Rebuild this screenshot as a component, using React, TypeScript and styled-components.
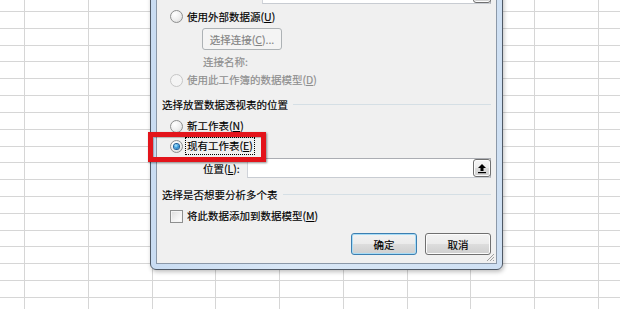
import React from "react";
import styled, { createGlobalStyle } from "styled-components";

const Global = createGlobalStyle`
  html, body { margin: 0; padding: 0; background: #fff; }
  body { width: 620px; height: 309px; overflow: hidden; }
  * { box-sizing: border-box; }
`;

const FONT = `"Noto Sans CJK SC", "Noto Sans", sans-serif`;

const Screen = styled.div`
  position: relative;
  width: 620px;
  height: 309px;
  overflow: hidden;
  background: #fff;
  font-family: ${FONT};
  font-size: 10.5px;
  color: #000;
  -webkit-text-stroke: 0.15px currentColor;
`;

const Sheet = styled.div`
  display: grid;
  grid-template-columns: repeat(11, 63.75px);
  grid-auto-rows: 16.82px;
  margin-left: -38.75px;
  margin-top: -4.82px;
`;

const Cell = styled.div`
  border-right: 1px solid #d6d6d6;
  border-bottom: 1px solid #d6d6d6;
`;

const Window = styled.div`
  position: absolute;
  left: 150px;
  top: -27px;
  width: 353px;
  border: 1px solid #4f5966;
  border-radius: 0 0 6px 6px;
  padding: 5px;
  background: linear-gradient(90deg, #c9dcf2 0%, #d9e7f6 40%, #cfe0f3 100%);
  box-shadow: 1px 2px 4px rgba(0, 0, 0, 0.25);
`;

const Content = styled.div`
  position: relative;
  border: 1px solid #8b98a8;
  background: #f0f0f0;
  display: flex;
  flex-direction: column;
  padding: 0 5px 8px 5px;
`;

const TopRow = styled.div`
  height: 26px;
  display: flex;
  align-items: flex-end;
  padding: 0 0 2px 100px;
`;

const InputBox = styled.div`
  flex: 1;
  height: 20px;
  background: #fff;
  border: 1px solid #abadb3;
  border-left-color: #d0d3d9;
  border-bottom-color: #c8ccd2;
  display: flex;
  align-items: center;
  justify-content: flex-end;
`;

const RangeButton = styled.div`
  width: 18px;
  height: 18px;
  margin-right: -1px;
  border: 1px solid #707070;
  border-radius: 3px;
  background: linear-gradient(#f6f6f6 0%, #ececec 50%, #dcdcdc 50%, #d0d0d0 100%);
  box-shadow: inset 0 0 0 1px #fcfcfc;
  display: flex;
  align-items: center;
  justify-content: center;
`;

const OptionRow = styled.div<{ $h: number; $mt?: number }>`
  height: ${(p) => p.$h}px;
  margin-top: ${(p) => p.$mt ?? 0}px;
  display: flex;
  align-items: center;
  padding-left: 8px;
  gap: 2px;
  white-space: nowrap;
`;

const Radio = styled.span<{ $checked?: boolean; $disabled?: boolean }>`
  flex: none;
  width: 13px;
  height: 13px;
  border-radius: 50%;
  border: 1px solid ${(p) => (p.$disabled ? "#c6c6c6" : "#8e8f8f")};
  background: ${(p) =>
    p.$disabled
      ? "#f4f4f4"
      : "radial-gradient(circle at 35% 30%, #ffffff 0, #eeeeee 55%, #d4d4d4 100%)"};
  display: flex;
  align-items: center;
  justify-content: center;
  &::after {
    content: "";
    display: ${(p) => (p.$checked ? "block" : "none")};
    width: 5px;
    height: 5px;
    border-radius: 50%;
    background: radial-gradient(circle at 40% 35%, #b5ecff 0, #3b9fe0 45%, #145a9a 100%);
    box-shadow: 0 0 0 1px #1e5f99;
  }
`;

const Check = styled.span`
  flex: none;
  width: 13px;
  height: 13px;
  border: 1px solid #8e8f8f;
  background: linear-gradient(135deg, #dcdcdc 0%, #f4f4f4 60%, #ffffff 100%);
  box-shadow: inset 0 0 0 1px #f4f4f4;
`;

const Label = styled.span<{ $disabled?: boolean; $focus?: boolean }>`
  color: ${(p) => (p.$disabled ? "#8d8d8d" : "#000")};
  line-height: 16px;
  padding: 0 1px;
  border: 1px ${(p) => (p.$focus ? "dotted #000" : "solid transparent")};
`;

const IndentRow = styled.div<{ $h: number; $mt?: number }>`
  height: ${(p) => p.$h}px;
  margin-top: ${(p) => p.$mt ?? 0}px;
  display: flex;
  align-items: center;
  padding-left: 40px;
  white-space: nowrap;
`;

const DisabledButton = styled.div`
  width: 80px;
  height: 22px;
  margin-top: 1px;
  align-self: flex-start;
  border: 1px solid #adb2b5;
  border-radius: 3px;
  background: #f4f4f4;
  color: #838383;
  display: flex;
  align-items: center;
  justify-content: center;
`;

const Hint = styled.span`
  color: #8d8d8d;
  padding-left: 1px;
`;

const LocationLabel = styled.span`
  width: 45px;
  padding-left: 1px;
`;

const GroupHeader = styled.div<{ $mt: number }>`
  height: 20px;
  margin-top: ${(p) => p.$mt}px;
  display: flex;
  align-items: center;
  white-space: nowrap;
  &::after {
    content: "";
    flex: 1;
    margin-left: 5px;
    border-top: 1px solid #d5dfe5;
  }
`;

const ButtonBar = styled.div`
  margin-top: 7px;
  height: 22px;
  display: flex;
  justify-content: flex-end;
  gap: 8px;
`;

const PushButton = styled.div<{ $default?: boolean }>`
  width: 66px;
  height: 22px;
  border: 1px solid ${(p) => (p.$default ? "#3c7fb1" : "#707070")};
  border-radius: 3px;
  background: linear-gradient(#f2f2f2 0%, #ebebeb 50%, #dddddd 50%, #cfcfcf 100%);
  box-shadow: inset 0 0 0 1px ${(p) => (p.$default ? "#a8dcf6" : "#fcfcfc")};
  display: flex;
  align-items: center;
  justify-content: center;
  color: #000;
`;

const Grip = styled.svg`
  position: absolute;
  right: 1px;
  bottom: 1px;
`;

const Highlight = styled.div`
  position: absolute;
  left: 148px;
  top: 132px;
  width: 118px;
  height: 30px;
  border: 5px solid #e3141b;
  box-shadow: 1px 1px 2px rgba(0, 0, 0, 0.45), inset 1px 1px 1px rgba(0, 0, 0, 0.25);
`;

const UpArrow = () => (
  <svg width="10" height="11" viewBox="0 0 10 11">
    <path d="M5 1 L9 5 H6.5 V8 H3.5 V5 H1 Z" fill="#000" />
    <rect x="1" y="9" width="8" height="1.2" fill="#000" />
  </svg>
);

export default function App() {
  const cells = Array.from({ length: 11 * 20 });
  return (
    <Screen>
      <Global />
      <Sheet>
        {cells.map((_, i) => (
          <Cell key={i} />
        ))}
      </Sheet>
      <Window>
        <Content>
          <TopRow>
            <InputBox>
              <RangeButton>
                <UpArrow />
              </RangeButton>
            </InputBox>
          </TopRow>
          <OptionRow $h={21}>
            <Radio />
            <Label>
              使用外部数据源(<u>U</u>)
            </Label>
          </OptionRow>
          <IndentRow $h={24}>
            <DisabledButton>
              选择连接(<u>C</u>)...
            </DisabledButton>
          </IndentRow>
          <IndentRow $h={20}>
            <Hint>连接名称:</Hint>
          </IndentRow>
          <OptionRow $h={18}>
            <Radio $disabled />
            <Label $disabled>
              使用此工作簿的数据模型(<u>D</u>)
            </Label>
          </OptionRow>
          <GroupHeader $mt={5}>选择放置数据透视表的位置</GroupHeader>
          <OptionRow $h={20} $mt={2}>
            <Radio />
            <Label>
              新工作表(<u>N</u>)
            </Label>
          </OptionRow>
          <OptionRow $h={20}>
            <Radio $checked />
            <Label $focus>
              现有工作表(<u>E</u>)
            </Label>
          </OptionRow>
          <IndentRow $h={22} $mt={1}>
            <LocationLabel>
              位置(<u>L</u>):
            </LocationLabel>
            <InputBox>
              <RangeButton>
                <UpArrow />
              </RangeButton>
            </InputBox>
          </IndentRow>
          <GroupHeader $mt={5}>选择是否想要分析多个表</GroupHeader>
          <OptionRow $h={20} $mt={2}>
            <Check />
            <Label>
              将此数据添加到数据模型(<u>M</u>)
            </Label>
          </OptionRow>
          <ButtonBar>
            <PushButton $default>确定</PushButton>
            <PushButton>取消</PushButton>
          </ButtonBar>
          <Grip width="10" height="10" viewBox="0 0 10 10">
            <path d="M9 2 L2 9 M9 5 L5 9 M9 8 L8 9" stroke="#a0a0a0" strokeWidth="1" />
          </Grip>
        </Content>
      </Window>
      <Highlight />
    </Screen>
  );
}
